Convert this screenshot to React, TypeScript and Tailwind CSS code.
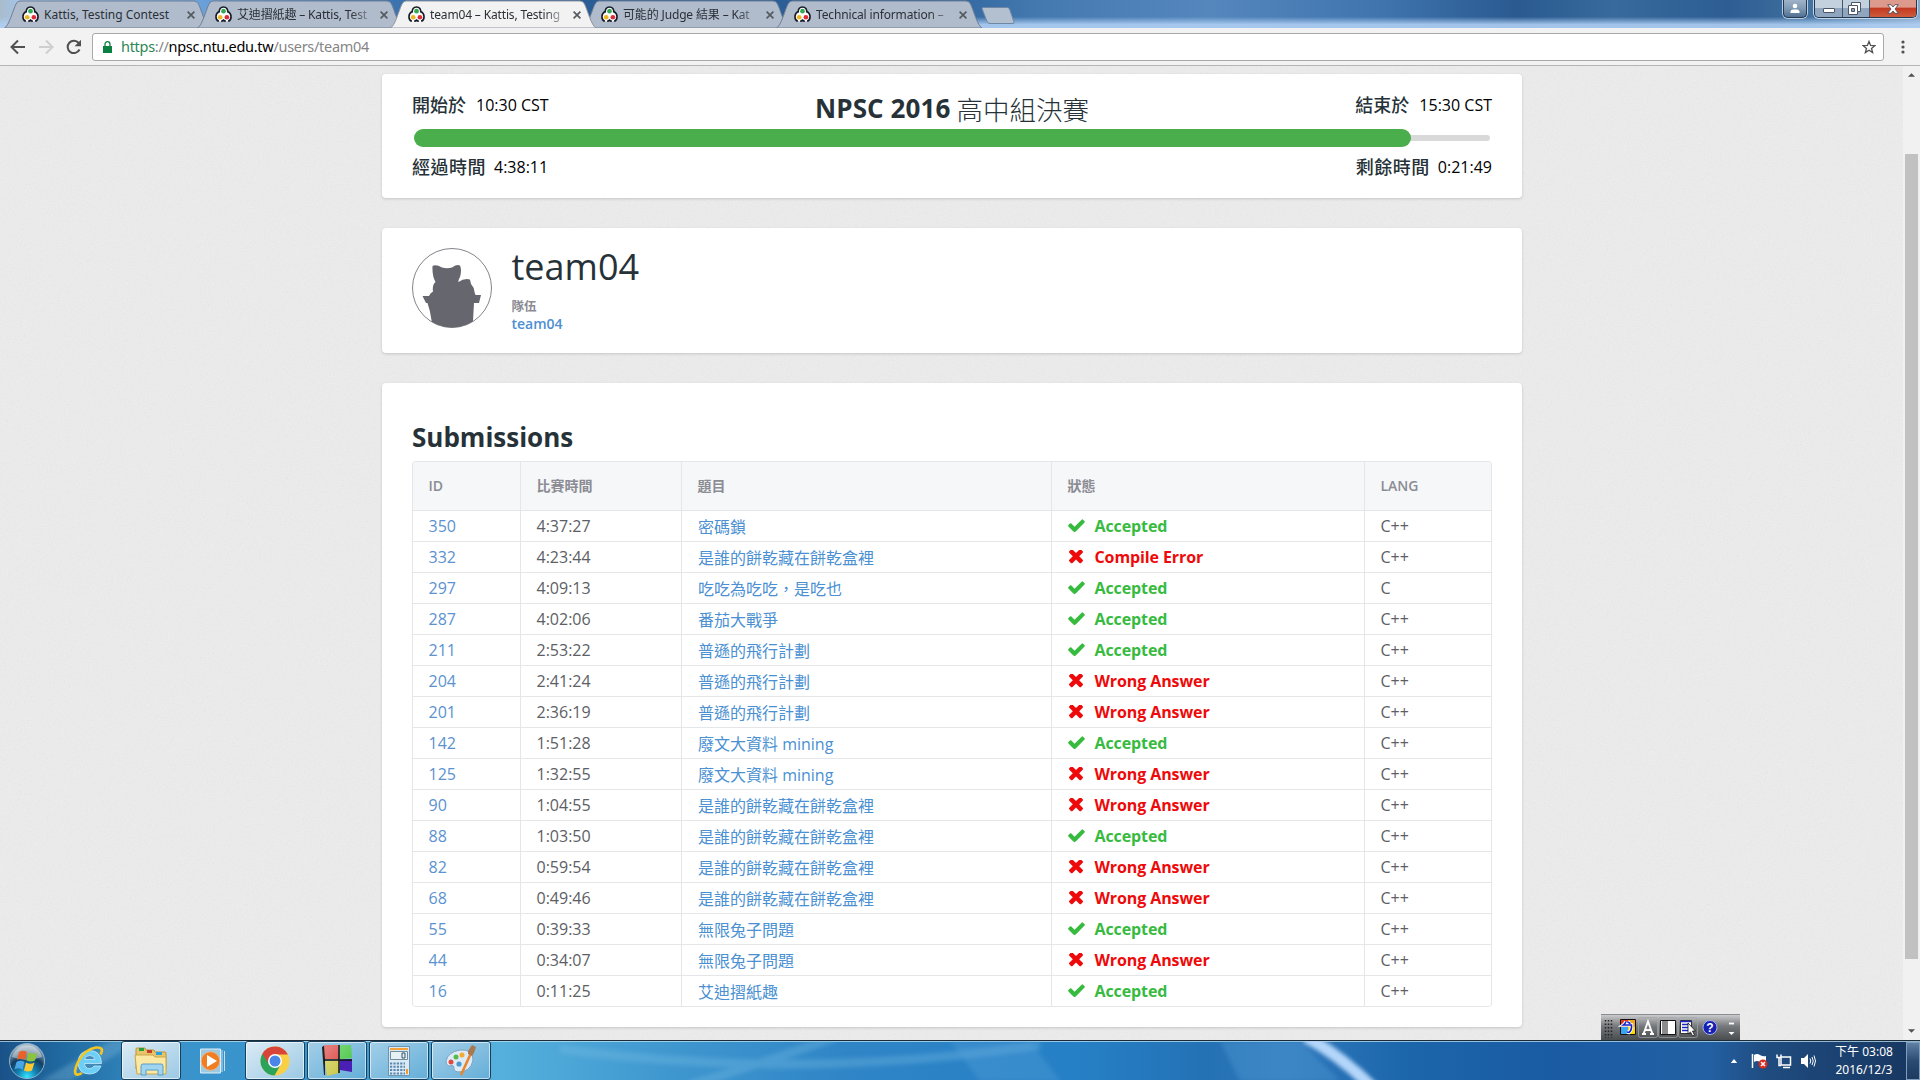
import React from "react";

const CJK = "font-['Open_Sans','Noto_Sans_CJK_TC',sans-serif]";

const rows: [string, string, string, string, string][] = [
  ["350", "4:37:27", "密碼鎖", "Accepted", "C++"],
  ["332", "4:23:44", "是誰的餅乾藏在餅乾盒裡", "Compile Error", "C++"],
  ["297", "4:09:13", "吃吃為吃吃，是吃也", "Accepted", "C"],
  ["287", "4:02:06", "番茄大戰爭", "Accepted", "C++"],
  ["211", "2:53:22", "普遜的飛行計劃", "Accepted", "C++"],
  ["204", "2:41:24", "普遜的飛行計劃", "Wrong Answer", "C++"],
  ["201", "2:36:19", "普遜的飛行計劃", "Wrong Answer", "C++"],
  ["142", "1:51:28", "廢文大資料 mining", "Accepted", "C++"],
  ["125", "1:32:55", "廢文大資料 mining", "Wrong Answer", "C++"],
  ["90", "1:04:55", "是誰的餅乾藏在餅乾盒裡", "Wrong Answer", "C++"],
  ["88", "1:03:50", "是誰的餅乾藏在餅乾盒裡", "Accepted", "C++"],
  ["82", "0:59:54", "是誰的餅乾藏在餅乾盒裡", "Wrong Answer", "C++"],
  ["68", "0:49:46", "是誰的餅乾藏在餅乾盒裡", "Wrong Answer", "C++"],
  ["55", "0:39:33", "無限兔子問題", "Accepted", "C++"],
  ["44", "0:34:07", "無限兔子問題", "Wrong Answer", "C++"],
  ["16", "0:11:25", "艾迪摺紙趣", "Accepted", "C++"],
];

function Favicon() {
  return (
    <svg viewBox="0 0 16 16" className="h-[17px] w-[17px] shrink-0">
      <path
        d="M8 .9c2.600 0 4.100 2 4.100 4.200 1.800 1 3.100 2.700 3 5.100-.1 2.600-1.900 4.300-4.100 4.300-1.200 0-2.200-.4-3-1-.8.6-1.800 1-3 1-2.200 0-4-1.700-4.100-4.300-.1-2.400 1.200-4.100 3-5.100C3.900 2.900 5.400.9 8 .9z"
        fill="#fff"
      />
      <path
        d="M4 6.300C3.600 3 5.300 1 8 1s4.400 2 4 5.300M4 5.100C2.200 6 .9 7.700.9 10c0 2.200 1 3.800 2.700 4.400M12 5.100c1.800.9 3.100 2.600 3.100 4.900 0 2.200-1 3.800-2.700 4.400M5.800 14.400q1.400-.2 2.200-1.100.8.900 2.200 1.100"
        fill="none"
        stroke="#161a26"
        strokeWidth="1.500"
      />
      <circle cx="8" cy="4.900" r="2.200" fill="#35a853" />
      <circle cx="4.900" cy="10.600" r="2.200" fill="#eeb422" />
      <circle cx="11.200" cy="10.600" r="2.200" fill="#dd2c3a" />
    </svg>
  );
}

function Cross() {
  return (
    <svg viewBox="0 0 8 8" className="h-2 w-2 shrink-0">
      <path d="M.6.6l6.800 6.800M7.400.6L.6 7.400" stroke="#555a61" strokeWidth="1.700" />
    </svg>
  );
}

function Tab({ title, active, fade }: { title: string; active?: boolean; fade?: boolean }) {
  return (
    <div className={"relative -mr-[14px] h-[28px] w-[207px] shrink-0 " + (active ? "z-10" : "")}>
      <svg viewBox="0 0 207 28" className="absolute inset-0 h-[28px] w-[207px]">
        <path
          d="M.5 28C5 26 9 10 12 4q1.500-3 4-3H190q3 0 4.500 3c3 6 7 22 11.500 24z"
          fill={active ? "#f2f2f2" : "#b0bccc"}
          stroke={active ? "#8f959e" : "#6f7f94"}
          strokeWidth="1"
        />
      </svg>
      <div className="relative flex h-[29px] items-center pl-[18px] pr-[16px]">
        <Favicon />
        <span
          className={
            "ml-[5px] w-[138px] whitespace-nowrap text-[12px] leading-[20px] text-[#2b2f36] font-['Noto_Sans','Noto_Sans_CJK_TC',sans-serif] " +
            (fade ? "tracking-[-0.15px] [mask-image:linear-gradient(to_right,#000_82%,rgba(0,0,0,0.25)_97%)]" : "")
          }
        >
          {title}
        </span>
        <span className="ml-[5px] flex">
          <Cross />
        </span>
      </div>
    </div>
  );
}

function WindowButtons() {
  return (
    <div className="mr-[3px] flex items-start">
      <div className="mr-[7px] flex h-[18px] w-[24px] items-center justify-center rounded-b-[5px] border border-t-0 border-[#24384f] bg-linear-to-b from-[#9fb3c9] via-[#7f99b5] to-[#4f6f92] shadow-[0_0_0_1px_#b9cde3]">
        <svg viewBox="0 0 10 11" className="h-[11px] w-[10px]">
          <circle cx="5" cy="3" r="2.300" fill="#fff" />
          <path d="M.5 10V8.500Q1 6.500 3 6.500h4q2 0 2.500 2V10z" fill="#fff" />
        </svg>
      </div>
      <div className="flex h-[18px] overflow-hidden rounded-b-[5px] border border-t-0 border-[#24384f] shadow-[0_0_0_1px_#c3d5e8]">
        <div className="flex w-[28px] items-center justify-center border-r border-[#40566f] bg-linear-to-b from-[#c3d0de] from-45% to-[#8fa6be] to-50%">
          <div className="mt-[4px] h-[5px] w-[12px] rounded-[1px] border border-[#4b5566] bg-white" />
        </div>
        <div className="flex w-[27px] items-center justify-center border-r border-[#40566f] bg-linear-to-b from-[#c3d0de] from-45% to-[#8fa6be] to-50%">
          <svg viewBox="0 0 13 13" className="mr-[3px] h-[13px] w-[13px]">
            <path d="M3.500 .5h9v9h-3v3h-9v-9h3z" fill="#fff" stroke="#4b5566" />
            <path d="M3.500 3.500h6v6" fill="none" stroke="#4b5566" />
            <path d="M3.500 6.500h3v3h-3z" fill="#8fa6be" stroke="#4b5566" />
          </svg>
        </div>
        <div className="flex w-[46px] items-center justify-center bg-linear-to-b from-[#dd9a8c] from-40% via-[#c23a22] via-50% to-[#cf5a3c]">
          <svg viewBox="0 0 12 10" className="h-[10px] w-[12px]">
            <path
              d="M.7.7h3.300L6 3 8 .7h3.300L8 5l3.300 4.300H8L6 7 4 9.300H.7L4 5z"
              fill="#fff"
              stroke="#4d4f5e"
              strokeWidth=".9"
            />
          </svg>
        </div>
      </div>
    </div>
  );
}

function Verdict({ text }: { text: string }) {
  const ok = text === "Accepted";
  return (
    <div className={"flex items-center font-bold tracking-[-0.1px] " + (ok ? "text-[#37bb3f]" : "text-[#ee0a0a]")}>
      <span className="flex w-[27px] items-center">
        {ok ? (
          <svg viewBox="121 300 1550 1300" className="h-[14px] w-[17px] fill-current">
            <path d="M1671 566q0 40-28 68l-724 724-136 136q-28 28-68 28t-68-28l-136-136-362-362q-28-28-28-68t28-68l136-136q28-28 68-28t68 28l294 295 656-657q28-28 68-28t68 28l136 136q28 28 28 68z" />
          </svg>
        ) : (
          <svg viewBox="302 426 1188 1188" className="ml-px h-[14px] w-[14px] fill-current">
            <path d="M1490 1322q0 40-28 68l-136 136q-28 28-68 28t-68-28l-294-294-294 294q-28 28-68 28t-68-28l-136-136q-28-28-28-68t28-68l294-294-294-294q-28-28-28-68t28-68l136-136q28-28 68-28t68 28l294 294 294-294q28-28 68-28t68 28l136 136q28 28 28 68t-28 68l-294 294 294 294q28 28 28 68z" />
          </svg>
        )}
      </span>
      {text}
    </div>
  );
}

const GRID = "grid grid-cols-[108px_161px_370px_313px_126px]";
const CELL = "flex items-center border-r border-[#e5e6e7] last:border-r-0";

function Submissions() {
  return (
    <section className="h-[644px] rounded-[4px] bg-white px-[30px] pt-[34px] shadow-[0_1px_3px_rgba(0,0,0,0.16)]">
      <h2 className="h-[44px] text-[26px] font-bold leading-[40px] text-[#263238]">Submissions</h2>
      <div className="overflow-hidden rounded-[4px] border border-b-0 border-[#e5e6e7]">
        <div className={GRID + " h-[49px] border-b border-[#e5e6e7] bg-[#f6f7f9] text-[14px] font-semibold text-[#8b8c94]"}>
          {["ID", "比賽時間", "題目", "狀態", "LANG"].map((h) => (
            <div key={h} className={CELL + " pb-[2px] pl-[15.5px]"}>
              {h}
            </div>
          ))}
        </div>
        {rows.map(([id, time, problem, status, lang]) => (
          <div key={id} className={GRID + " h-[31px] border-b border-[#e5e6e7] text-[16px] leading-[28px] text-[#5c6065]"}>
            <div className={CELL + " py-px pl-[15.5px] text-[#5b92cf]"}>{id}</div>
            <div className={CELL + " py-px pl-[15.5px]"}>{time}</div>
            <div className={CELL + " pb-0 pl-4 pt-[2px] text-[#4a90d2]"}>{problem}</div>
            <div className={CELL + " py-px pl-[15.5px]"}>
              <Verdict text={status} />
            </div>
            <div className={CELL + " py-px pl-[15.5px]"}>{lang}</div>
          </div>
        ))}
      </div>
    </section>
  );
}

function ContestHeader() {
  return (
    <section className="h-[124px] rounded-[4px] bg-white px-[30px] shadow-[0_1px_3px_rgba(0,0,0,0.16)]">
      <div className="flex h-[55px] items-start justify-between pt-[16px] text-[16px] leading-[30px] text-black">
        <div className="flex w-[200px] gap-[10px]">
          <span className="text-[18px] font-medium text-[#263238]">開始於</span>10:30 CST
        </div>
        <h1 className="flex items-baseline gap-[6px] text-[26px] leading-[36px] text-[#263238]">
          <b className="tracking-[0.1px]">NPSC 2016</b>
          <span className="relative top-[2px] text-[26.500px] font-light">高中組決賽</span>
        </h1>
        <div className="flex w-[200px] justify-end gap-[10px]">
          <span className="text-[18px] font-medium text-[#263238]">結束於</span>15:30 CST
        </div>
      </div>
      <div className="mx-[2px] flex h-[18px] items-center">
        <div className="z-10 h-[18px] w-[997px] rounded-[9px] bg-[#4aae4c]" />
        <div className="-ml-[9px] h-[6px] flex-1 rounded-r-[3px] bg-[#d9d9d9]" />
      </div>
      <div className="flex justify-between pt-[5px] text-[16px] leading-[30px] text-black">
        <div className="flex gap-[8px]">
          <span className="text-[18px] font-medium tracking-[0.5px] text-[#263238]">經過時間</span>4:38:11
        </div>
        <div className="flex gap-[8px]">
          <span className="text-[18px] font-medium tracking-[0.5px] text-[#263238]">剩餘時間</span>0:21:49
        </div>
      </div>
    </section>
  );
}

function TeamCard() {
  return (
    <section className="flex h-[125px] rounded-[4px] bg-white px-[30px] pt-[20px] shadow-[0_1px_3px_rgba(0,0,0,0.16)]">
      <svg viewBox="0 0 80 80" className="h-[80px] w-[80px]">
        <defs>
          <clipPath id="avatar">
            <circle cx="40" cy="40" r="39.500" />
          </clipPath>
        </defs>
        <circle cx="40" cy="40" r="39.500" fill="#fff" stroke="#83848b" />
        <path
          clipPath="url(#avatar)"
          fill="#66666e"
          d="M20.500 18Q24 16 30 19.500Q35 21 40 19.500Q45 16 48 17.500Q50 22 48 29Q46 32 46.500 34Q52 30 58 31.500L59 36Q62 39 62.500 44L63.500 47H69L67 55H62L60.500 82H20L19.500 72Q18 62 15.500 55H14L10.500 48H17Q18 45 21 43.500Q20 37 23.500 34Q20 28 20.500 18z"
        />
      </svg>
      <div className="ml-[19.500px] flex flex-col">
        <div className="h-[51px] text-[36px] leading-[38px] text-[#263238]">team04</div>
        <div className="h-[15px] text-[12.500px] font-bold leading-[15px] text-[#8b8b93]">隊伍</div>
        <div className="text-[14px] font-semibold leading-[20px] text-[#4d8fd1]">team04</div>
      </div>
    </section>
  );
}

function TaskButton({ children, bright }: { children: React.ReactNode; bright?: boolean }) {
  return (
    <div
      className={
        "mr-[2px] flex h-[39px] w-[60px] items-center justify-center rounded-[3px] border border-[#17405f] shadow-[inset_0_0_0_1px_rgba(255,255,255,0.6)] " +
        (bright
          ? "bg-linear-to-br from-[#dcebf5] to-[#9ac9e4]"
          : "bg-linear-to-br from-[#a3cfe8] to-[#63aed8]")
      }
    >
      {children}
    </div>
  );
}

function Taskbar() {
  return (
    <footer className="relative flex h-[40px] items-start border-t border-[#1c2b3a] bg-[linear-gradient(90deg,#1a5288_0,#1f689f_3%,#3a93cb_9%,#3896cf_17%,#55b0dc_26%,#4199d0_34%,#2f85c6_44%,#2680c6_56%,#2471b4_63%,#3079bd_67%,#1c66ab_73%,#1a5ba3_81%,#2360a3_89%,#1f4c80_92%,#17365f_100%)] shadow-[inset_0_1px_0_rgba(190,225,240,0.75)]">
      <svg viewBox="0 0 1920 39" className="absolute inset-0 h-[39px] w-full">
        <defs>
          <filter id="soft">
            <feGaussianBlur stdDeviation="2" />
          </filter>
        </defs>
        <g filter="url(#soft)" fill="none">
          <path d="M1306 -4Q1340 14 1374 48" stroke="#b4d6fa" strokeWidth="12" />
          <path d="M835 -4Q770 20 690 44M560 8Q800 40 1040 4" stroke="#7fc0e6" strokeOpacity=".3" strokeWidth="9" />
          <path d="M950 0h80l30 40h-80zM1220 0h80l40 40h-100z" fill="#5da4dc" fillOpacity=".3" />
          <path d="M40 40L110 0h30L70 40z" fill="#7fb6d8" fillOpacity=".35" />
        </g>
      </svg>
      <div className="relative flex h-[39px] items-center">
        <svg viewBox="0 0 38 38" className="ml-[8px] h-[38px] w-[38px]">
          <defs>
            <radialGradient id="orb" cx=".5" cy=".95" r=".9">
              <stop offset="0" stopColor="#35e6ff" />
              <stop offset=".3" stopColor="#1383b5" />
              <stop offset=".62" stopColor="#123e63" />
              <stop offset="1" stopColor="#a9bdca" />
            </radialGradient>
          </defs>
          <circle cx="19" cy="19" r="17.500" fill="url(#orb)" stroke="#8fb3cc" />
          <path d="M4 15a15.500 15.500 0 0 1 30 0Q19 21 4 15z" fill="#fff" opacity=".4" />
          <path d="M11 10q4-2.500 8 0l-2 8q-4-2.500-8 0z" fill="#e8632b" />
          <path d="M20.500 10.500q4 2.500 9 0l-2.500 8q-4 2-8.500 0z" fill="#8cc43c" />
          <path d="M8.500 20q4-2.500 8 0l-2 7.500q-4-2.500-8 0z" fill="#4aa5e6" />
          <path d="M18 20.500q4 2.500 8.500 0l-2.500 8q-4 2-8 0z" fill="#fcc832" />
        </svg>
        <svg viewBox="0 0 32 32" className="ml-[27px] h-[32px] w-[32px]">
          <path
            d="M28.500 18.500H11.500q.5 5 5 5 3 0 4.500-2.500h7Q25 29 16.500 29 5.500 29 5 17.500 5.500 6 16.500 5.500q11.500 0 12 13zM11.700 14.500h10.100q-.5-4-5-4t-5.100 4z"
            fill="#6cd0f6"
            fillRule="evenodd"
            stroke="#d5f1fd"
            strokeWidth=".7"
          />
          <path d="M27.500 9.500Q32 2 23 2.500 12 4 5 17 0 28 3.500 29.500 6 30 9 28" fill="none" stroke="#f4c61f" strokeWidth="2.600" />
        </svg>
        <div className="ml-[16px] flex">
          <TaskButton bright>
            <svg viewBox="0 0 34 30" className="h-[30px] w-[34px]">
              <path d="M2 6V3q0-1 1-1h8l1 2h8l1 2h10q1 0 1 1v16H2z" fill="#e8c56a" stroke="#b99438" />
              <path d="M5 2h5v3H5z" fill="#28a03c" />
              <path d="M13 4h5v3h-5z" fill="#c83c28" />
              <path d="M22 6h6v3h-6z" fill="#2aa0dc" />
              <path d="M1 9h18l2 2h11v17H3z" fill="#f9e9a5" stroke="#caa548" />
              <path d="M7 29V20q0-2 2-2h18q2 0 2 2v9h-5v-5H12v5z" fill="#9fd5f0" stroke="#5a9cc4" />
            </svg>
          </TaskButton>
        </div>
        <svg viewBox="0 0 30 26" className="ml-[14px] mr-[17px] h-[26px] w-[31px]">
          <path d="M3 1h20v24H3z" fill="#9ec9e2" stroke="#dceefa" />
          <path d="M24.500 2v22M27 3v20" stroke="#c5dfee" />
          <circle cx="13" cy="13" r="9.300" fill="#f07d22" stroke="#e9b48a" />
          <path d="M9.500 7v12l10-6z" fill="#fff" />
        </svg>
        <div className="flex">
          <TaskButton bright>
            <svg viewBox="0 0 30 30" className="h-[30px] w-[30px]">
              <circle cx="15" cy="15" r="14.500" fill="#f9cf45" />
              <path d="M15 15L2.400 7.700A14.500 14.500 0 0 0 14.500 29.500L21 18z" fill="#2ba35a" />
              <path d="M2.400 7.700A14.500 14.500 0 0 1 27.900 8.500H15L9 18z" fill="#d94438" />
              <circle cx="15" cy="15" r="7" fill="#fff" />
              <circle cx="15" cy="15" r="5.500" fill="#4a86e8" />
            </svg>
          </TaskButton>
          <TaskButton>
            <svg viewBox="0 0 30 31" className="h-[31px] w-[30px]">
              <defs>
                <linearGradient id="shine" x1="0" y1="0" x2="1" y2="1">
                  <stop offset="0" stopColor="#fff" stopOpacity=".4" />
                  <stop offset="1" stopColor="#fff" stopOpacity="0" />
                </linearGradient>
              </defs>
              <path d="M0 2l3-2v30H2z" fill="#222" />
              <path d="M2 0h14l1 14H3z" fill="#d6332f" />
              <path d="M18 0h11l1 13-12 1z" fill="#3fc43c" />
              <path d="M3 16l14-1v13l-12 3z" fill="#c6c338" />
              <path d="M18 15l12-1v13l-12-2z" fill="#4a1fb5" />
              <path d="M2 0h14l1 14H3zM18 0h11l1 13-12 1zM3 16l14-1v13l-12 3z" fill="url(#shine)" />
              <path d="M17 0v28M2 15h28" stroke="#111" strokeWidth="1.500" />
            </svg>
          </TaskButton>
          <TaskButton>
            <svg viewBox="0 0 24 30" className="h-[30px] w-[24px]">
              <path d="M1.500.5h21v29h-21z" fill="#d9eaf6" stroke="#6b94b3" />
              <path d="M3 2h18v2H3z" fill="#f3a23a" />
              <path d="M3.500 5.500h17v8h-17z" fill="#e5f1f4" stroke="#6f8b9c" />
              <path d="M15 7h3v5h-3z" fill="none" stroke="#35536b" />
              <path d="M3 17.500h15M3 20.800h15M3 24.100h15M3 27.400h15" stroke="#5a86ab" strokeWidth="2" strokeDasharray="2.200 1.200" />
              <path d="M19 23h2v5h-2z" fill="#f39a2a" />
            </svg>
          </TaskButton>
          <TaskButton>
            <svg viewBox="0 0 32 31" className="h-[31px] w-[32px]">
              <path d="M15 5Q28 4 28 15 26 27 13 27 8 26 9 22 8 19 5 21 1 21 1 16 3 7 15 5z" fill="#dcebf7" stroke="#7fa2bf" />
              <circle cx="6" cy="17" r="2.500" fill="#e04a3c" />
              <circle cx="11" cy="12" r="2.500" fill="#57b947" />
              <circle cx="17" cy="10" r="2.500" fill="#f3a932" />
              <circle cx="14" cy="19" r="2.600" fill="#4a9acb" />
              <path d="M26 8L16 30" stroke="#e8862e" strokeWidth="2.600" />
              <path d="M23 6l4-6 4 2-2 6-2 3-4-2z" fill="#a87950" />
            </svg>
          </TaskButton>
        </div>
      </div>
      <div className="relative ml-auto flex h-[39px] items-center text-white">
        <svg viewBox="0 0 8 5" className="mr-[13px] h-[4px] w-[8px]">
          <path d="M0 5l4-5 4 5z" fill="#fff" />
        </svg>
        <svg viewBox="0 0 17 16" className="mr-[8px] h-[16px] w-[17px]">
          <path d="M1.500 1v14" stroke="#fff" strokeWidth="1.500" />
          <path d="M3 2q3-2 6 0t6 1v7q-3 1-6-1t-6 0z" fill="#fff" />
          <circle cx="12" cy="11" r="4.500" fill="#d9291c" />
          <path d="M10 9l4 4M14 9l-4 4" stroke="#fff" strokeWidth="1.500" />
        </svg>
        <svg viewBox="0 0 16 16" className="mr-[8px] h-[16px] w-[16px]">
          <path d="M5 4h9.500v8H5zM7 14.500h7M1 1.500v3h4v-3M3 5v7.500h2" fill="none" stroke="#fff" strokeWidth="1.500" />
        </svg>
        <svg viewBox="0 0 16 16" className="mr-[15px] h-[16px] w-[16px]">
          <path d="M1 5h3l4-4v14l-4-4H1z" fill="#fff" />
          <path d="M10 5.500q1.500 2.500 0 5M12 4q2.500 4 0 8M14 2.500q3 5.500 0 11" fill="none" stroke="#fff" />
        </svg>
        <div className="mr-[9px] flex w-[66px] flex-col items-center text-[12px] leading-[18px] font-['Noto_Sans','Noto_Sans_CJK_TC',sans-serif]">
          <span className="whitespace-nowrap">下午 03:08</span>
          <span className="whitespace-nowrap">2016/12/3</span>
        </div>
        <div className="h-[38px] w-[14px] border border-[#7f9dbd] bg-linear-to-b from-[#5f7fa3] via-[#2b4b73] to-[#1d3a60]" />
      </div>
    </footer>
  );
}

function LanguageBar() {
  return (
    <div className="absolute bottom-0 left-[1601px] flex h-[26px] w-[139px] items-center border-t border-[#8b8d90] bg-linear-to-b from-[#c9cbcd] from-0% via-[#76797c] via-45% to-[#4a4d50]">
      <svg viewBox="0 0 139 25" className="h-[25px] w-[139px]">
        <path d="M4.500 5v18M7.500 5v18M10.500 5v18" stroke="#222" strokeWidth="1.500" strokeDasharray="1.500 2" />
        <path d="M19.500 4.500h15v15h-15z" fill="#ffd800" stroke="#111" />
        <path d="M20 5h7v7h-7z" fill="#e63a1e" />
        <path d="M27 5h7v7h-7z" fill="#f5a31c" />
        <path d="M20 12h7v7h-7z" fill="#3aa5f0" />
        <path d="M25 6.500q-1 2.500-2.500 3.500h8q.5 5-2.500 7.500l-2-.5M26.500 7l3 1.500" fill="none" stroke="#fff" strokeWidth="3.500" />
        <path d="M25 6.500q-1 2.500-2.500 3.500h8q.5 5-2.500 7.500l-2-.5M26.500 7l3 1.500" fill="none" stroke="#1420c8" strokeWidth="1.600" />
        <g fill="none" stroke="#a3a5a7" strokeOpacity=".7">
          <rect x="37.500" y="2.500" width="19" height="20" rx="2" />
          <rect x="57.500" y="2.500" width="19" height="20" rx="2" />
          <rect x="77.500" y="2.500" width="19" height="20" rx="2" />
        </g>
        <path d="M41 19h4M49 19h4M42.500 19L47 6.500 51.500 19M44 15h6" fill="none" stroke="#fff" strokeWidth="1.900" />
        <path d="M59.500 5.500h15v14h-15z" fill="#fff" stroke="#111" />
        <path d="M61 6h6v13h-6z" fill="#8c8c8c" />
        <path d="M79.500 5.500h11v13h-11z" fill="#fff" stroke="#333" />
        <path d="M79 6.500h11M81 9.500h7M81 12.500h7M81 15.500h7" stroke="#1c26c0" strokeWidth="1.500" />
        <path d="M87 8v11l2.500-2 2 4 2-1-2-4h3z" fill="#fff" stroke="#111" strokeWidth=".8" />
        <circle cx="109" cy="12.500" r="7" fill="#1620b4" stroke="#a9b2e6" />
        <text x="109" y="17" textAnchor="middle" className="fill-white font-['Liberation_Sans',sans-serif] text-[12px] font-bold">
          ?
        </text>
        <path d="M128 8.500h5" stroke="#fff" strokeWidth="1.800" />
        <path d="M127.500 17h6l-3 3z" fill="#fff" />
      </svg>
    </div>
  );
}

export default function App() {
  return (
    <div className={"flex h-[1080px] w-[1920px] flex-col overflow-hidden bg-[#f2f2f2] " + CJK}>
      <header className="flex h-[28px] items-start bg-[linear-gradient(180deg,transparent_60%,rgba(176,207,243,0.9)_88%),linear-gradient(90deg,#a9bccb_0,#a5c4e8_1%,#6ea2dc_10%,#3b72ad_21%,#2a5d95_30%,#2d6099_48%,#4479b0_54%,#5587bd_63%,#3f74ad_72%,#2a5a90_79%,#386a9d_84%,#2d5d93_90%,#40709f_94%,#88a8cb_100%)]">
        <div className="ml-[4px] flex">
          <Tab title="Kattis, Testing Contest" />
          <Tab title="艾迪摺紙趣 – Kattis, Test" fade />
          <Tab title="team04 – Kattis, Testing" active fade />
          <Tab title="可能的 Judge 結果 – Kat" fade />
          <Tab title="Technical information –" fade />
        </div>
        <svg viewBox="0 0 34 18" className="ml-[12px] mt-[7px] h-[18px] w-[34px]">
          <path d="M1 1.500Q1 .5 2.500.5H26q2 0 2.500 1.500l4.500 13q.5 1.500-1 1.500H9q-2 0-3-2z" fill="#b3c0d0" stroke="#6f87a3" />
        </svg>
        <div className="ml-auto flex">
          <WindowButtons />
        </div>
      </header>

      <div className="flex h-[38px] items-center border-b border-[#b5b5b5] bg-[#f2f2f2] pl-[10px]">
        <svg viewBox="0 0 16 16" className="h-4 w-4">
          <path d="M15 8H2M8 1.500L1.500 8 8 14.500" fill="none" stroke="#505050" strokeWidth="2" />
        </svg>
        <svg viewBox="0 0 16 16" className="ml-[12px] h-4 w-4">
          <path d="M1 8h13M8 1.500L14.500 8 8 14.500" fill="none" stroke="#cfcfcf" strokeWidth="2" />
        </svg>
        <svg viewBox="0 0 16 16" className="ml-[12px] h-4 w-4">
          <path d="M13.500 10.500A6.200 6.200 0 1 1 12.700 4" fill="none" stroke="#505050" strokeWidth="2" />
          <path d="M15 .8v6.400H8.600z" fill="#505050" />
        </svg>
        <div className="ml-[10px] flex h-[28px] w-[1792px] items-center rounded-[3px] border border-[#a9a9a9] bg-white pl-[10px] pr-[7px]">
          <svg viewBox="0 0 9 12" className="mr-[9px] h-[12px] w-[9px]">
            <path d="M0 5h9v7H0z" fill="#0b8043" />
            <path d="M2 5V3.200a2.500 2.500 0 0 1 5 0V5" fill="none" stroke="#0b8043" strokeWidth="1.300" />
          </svg>
          <span className="pb-px text-[14.500px] leading-[24px] tracking-[-0.3px] text-[#858585] font-['Noto_Sans',sans-serif]">
            <span className="text-[#2c8755]">https</span>://<span className="text-black">npsc.ntu.edu.tw</span>/users/team04
          </span>
          <svg viewBox="0 0 15 15" className="ml-auto h-[14px] w-[14px]">
            <path d="M7.500 1.500l1.700 4.300 4.500.3-3.500 2.900 1.200 4.500-3.900-2.500-3.900 2.500 1.200-4.500L1.300 6.100l4.500-.3z" fill="none" stroke="#505050" strokeWidth="1.400" />
          </svg>
        </div>
        <svg viewBox="0 0 4 14" className="ml-[17px] h-[14px] w-[4px]">
          <circle cx="2" cy="2" r="1.600" fill="#505050" />
          <circle cx="2" cy="7" r="1.600" fill="#505050" />
          <circle cx="2" cy="12" r="1.600" fill="#505050" />
        </svg>
      </div>

      <div className="relative flex h-[974px]">
        <div className="relative flex-1 overflow-hidden bg-[#ededed]">
          <svg className="absolute inset-0 h-full w-full opacity-[0.12]">
            <filter id="grain">
              <feTurbulence type="fractalNoise" baseFrequency="0.7" numOctaves="2" />
              <feColorMatrix type="saturate" values="0" />
            </filter>
            <rect width="100%" height="100%" filter="url(#grain)" />
          </svg>
          <main className="relative ml-[382px] flex w-[1140px] flex-col gap-[30px] pt-[8px]">
            <ContestHeader />
            <TeamCard />
            <Submissions />
          </main>
        </div>
        <div className="flex w-[17px] flex-col items-center bg-[#f1f1f1]">
          <svg viewBox="0 0 8 4" className="mt-[7px] h-[4px] w-[7px]">
            <path d="M0 4l4-4 4 4z" fill="#505050" />
          </svg>
          <div className="mt-[77px] h-[805px] w-[13px] bg-[#c1c1c1]" />
          <svg viewBox="0 0 8 4" className="mb-[7px] mt-auto h-[4px] w-[7px]">
            <path d="M0 0l4 4 4-4z" fill="#505050" />
          </svg>
        </div>
        <LanguageBar />
      </div>
      <Taskbar />
    </div>
  );
}
